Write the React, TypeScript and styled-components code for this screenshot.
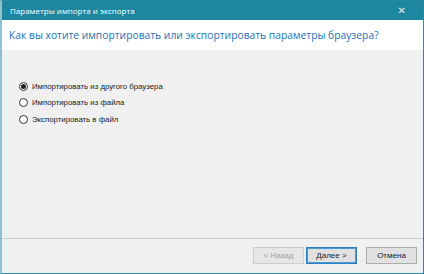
import React, { useState } from 'react';
import styled, { createGlobalStyle } from 'styled-components';

const GlobalStyle = createGlobalStyle`
  html,
  body {
    margin: 0;
    padding: 0;
    background: #ffffff;
  }
`;

const WindowBlock = styled.div`
  width: 424px;
  height: 274px;
  box-sizing: border-box;
  display: flex;
  flex-direction: column;
  background-color: #f0f0f0;
  border: 1px solid #2a88a3;
  border-left: 2px solid #8cc3d2;
  font-family: 'Liberation Sans', Arial, sans-serif;
`;

const TitleBar = styled.div`
  height: 19px;
  display: flex;
  align-items: center;
  justify-content: space-between;
  padding: 0 17px 0 8px;
  background-color: #1d87a1;
  color: #ffffff;
  font-family: 'Open Sans', sans-serif;
  font-size: 8px;
`;

const CloseButton = styled.button`
  border: none;
  padding: 0;
  background: none;
  color: #e8f4f7;
  font-family: 'DejaVu Sans', sans-serif;
  font-size: 10px;
  line-height: 1;
  cursor: pointer;
`;

const HeaderBlock = styled.div`
  height: 30px;
  display: flex;
  align-items: center;
  padding: 0 7px;
  background-color: #ffffff;

  h1 {
    margin: 0;
    font-family: 'Open Sans', sans-serif;
    font-size: 10.3px;
    font-weight: normal;
    color: #2372b8;
    white-space: nowrap;
  }
`;

const OptionList = styled.div`
  flex: 1;
  display: flex;
  flex-direction: column;
  gap: 4px;
  padding: 30px 0 0 17px;
`;

const OptionLabel = styled.label`
  display: flex;
  align-items: center;
  gap: 4px;
  height: 12.5px;
  font-size: 7.8px;
  color: #1a1a1a;
  cursor: pointer;
`;

const RadioCircle = styled.span<{ checked: boolean }>`
  width: 9px;
  height: 9px;
  box-sizing: border-box;
  border-radius: 50%;
  border: 1px solid #333333;
  background: #ffffff;
  display: flex;
  align-items: center;
  justify-content: center;

  &::after {
    content: '';
    width: 5px;
    height: 5px;
    border-radius: 50%;
    background: ${({ checked }) => (checked ? '#222222' : 'transparent')};
  }
`;

const Footer = styled.div`
  height: 33px;
  display: flex;
  align-items: center;
  justify-content: flex-end;
  gap: 9px;
  padding: 0 6px 1px 0;
  border-top: 1px solid #cfcfcf;
`;

const ButtonPair = styled.div`
  display: flex;
  gap: 2px;
`;

const DialogButton = styled.button<{ primary?: boolean }>`
  width: 51px;
  height: 17px;
  padding: 0;
  box-sizing: border-box;
  font-family: 'Liberation Sans', Arial, sans-serif;
  font-size: 8px;
  color: ${({ disabled }) => (disabled ? '#a0a0a0' : '#1a1a1a')};
  background-color: ${({ disabled }) => (disabled ? '#e6e6e6' : '#e1e1e1')};
  border: 1px solid
    ${({ primary, disabled }) =>
      primary ? '#2e7fc2' : disabled ? '#cccccc' : '#adadad'};
  box-shadow: ${({ primary }) => (primary ? 'inset 0 0 0 1px #4a9ad8' : 'none')};
  cursor: pointer;
`;

const options = [
  'Импортировать из другого браузера',
  'Импортировать из файла',
  'Экспортировать в файл',
];

const App = () => {
  const [selected, setSelected] = useState(0);

  return (
    <>
      <GlobalStyle />
      <WindowBlock>
        <TitleBar>
          <span>Параметры импорта и экспорта</span>
          <CloseButton type="button">✕</CloseButton>
        </TitleBar>
        <HeaderBlock>
          <h1>Как вы хотите импортировать или экспортировать параметры браузера?</h1>
        </HeaderBlock>
        <OptionList>
          {options.map((option, index) => (
            <OptionLabel key={option} onClick={() => setSelected(index)}>
              <RadioCircle checked={selected === index} />
              {option}
            </OptionLabel>
          ))}
        </OptionList>
        <Footer>
          <ButtonPair>
            <DialogButton type="button" disabled>
              &lt; Назад
            </DialogButton>
            <DialogButton type="button" primary>
              Далее &gt;
            </DialogButton>
          </ButtonPair>
          <DialogButton type="button">Отмена</DialogButton>
        </Footer>
      </WindowBlock>
    </>
  );
};

export default App;
